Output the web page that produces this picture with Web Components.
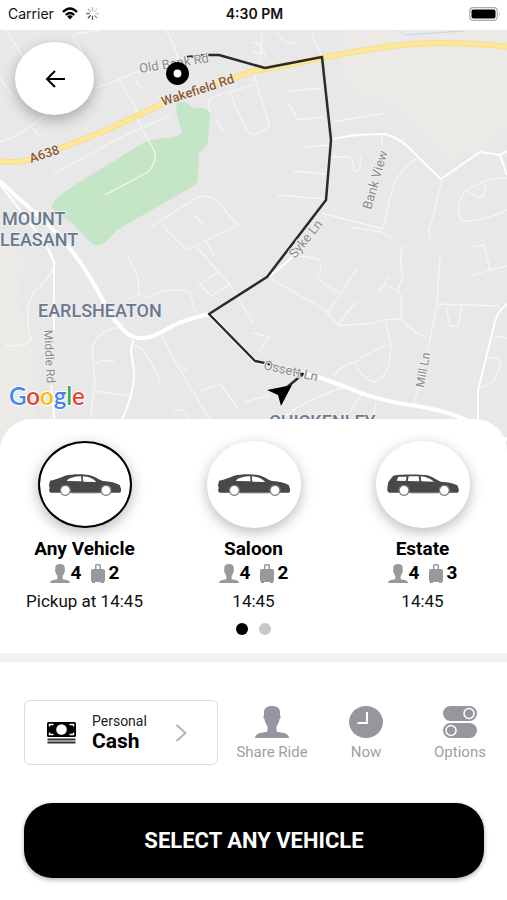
<!DOCTYPE html>
<html lang="en">
<head>
<meta charset="utf-8">
<meta name="viewport" content="width=device-width, initial-scale=1">
<title>Choose a vehicle</title>
<style>
    body {
        margin: 0;
        background: #fff;
        color: #111;
        font-family: Roboto, "Liberation Sans", sans-serif;
    }
</style>
</head>
<body>
<booking-screen></booking-screen>

<script>
const ICONS = {
    person: `<svg viewBox="0 0 34 32"><path fill="currentColor" d="M17 0c5.500 0 8 2.500 8 6.500v3c1 .5.700 3-.6 4C24 17 22.500 19 21.500 20v5.500c2.500 1 7 .8 9.500 2.300 2 1.200 3 2.700 3 4.200H0c0-1.500 1-3 3-4.200 2.500-1.500 7-1.300 9.500-2.300V20c-1-1-2.500-3-2.900-6.500-1.300-1-1.600-3.500-.6-4v-3C9 2.500 11.500 0 17 0z"/></svg>`,
    bag: `<svg viewBox="0 0 14 19"><path fill="currentColor" fill-rule="evenodd" d="M4 5V1.500Q4 0 5.500 0h3Q10 0 10 1.500V5h2q2 0 2 2v9q0 2-1 2v1h-3v-1H4v1H1v-1q-1 0-1-2V7q0-2 2-2zM5.500 1.500V5h3V1.500z"/></svg>`,
    clock: `<svg viewBox="0 0 34 32"><ellipse cx="17" cy="16" rx="17" ry="16" fill="currentColor"/><path d="M18 6v11H8.500" fill="none" stroke="#fff" stroke-width="2"/></svg>`,
    options: `<svg viewBox="0 0 34 32"><rect width="34" height="15" rx="7.500" fill="currentColor"/><rect y="17" width="34" height="15" rx="7.500" fill="currentColor"/><g fill="none" stroke="#fff" stroke-width="1.600"><circle cx="26" cy="7.500" r="5"/><circle cx="8" cy="24.500" r="5"/></g></svg>`,
    saloon: `<svg viewBox="0 0 216 66"><path fill="#484848" d="M3 20C18 17 30 12 48 5c22-6 62-6 80 0 14 4 22 12 34 16 22 2 38 5 50 12l4 11v9l-4 3H5L0 51 2 42 0 34z"/><path fill="#fff" d="M54 19q12-11 42-12l2 15-43-1zM101 7q26 1 41 17l-39-1z"/><g fill="#fff" stroke="#777" stroke-width="4"><circle cx="49" cy="49" r="15"/><circle cx="171" cy="49" r="15"/></g><path d="M68 57h84" stroke="#777" stroke-width="2"/></svg>`,
    estate: `<svg viewBox="0 0 216 66"><path fill="#484848" d="M4 24L18 6C28 1 105 0 125 5c15 4 24 13 36 18 22 1 40 5 50 11l4 11v8l-4 3H6L1 51V42z"/><path fill="#fff" d="M34 8h25l-3 13-27-1zM65 7h30l2 15-35-1zM101 7q24 2 40 16l-38-1z"/><g fill="#fff" stroke="#777" stroke-width="4"><circle cx="51" cy="49" r="15"/><circle cx="172" cy="49" r="15"/></g><path d="M70 57h84" stroke="#777" stroke-width="2"/></svg>`
};

class StatusBar extends HTMLElement {
    constructor() {
        super();
        this.attachShadow({ mode: 'open' }).innerHTML = `
            <style>
                :host {
                    display: grid;
                    grid-template-columns: 1fr auto 1fr;
                    align-items: center;
                    height: 30px;
                    padding: 0 6px 3px 8px;
                    box-sizing: border-box;
                    font-family: Inter, sans-serif;
                    font-size: 14px;
                    background: #fff;
                }
                .carrier { display: flex; align-items: center; gap: 8px; }
                .time { font-weight: 600; }
                .battery { justify-self: end; }
                svg { display: block; }
            </style>
            <div class="carrier">
                <span>Carrier</span>
                <svg width="16" height="13" viewBox="0 0 16 13"><g fill="none" stroke="#000" stroke-width="2.400"><path d="M1 5Q8-2 15 5"/><path d="M3.800 8Q8 4 12.200 8"/></g><path d="M8 8.300q1.700 0 2.800 1.300L8 12.600 5.200 9.600Q6.300 8.300 8 8.300z"/></svg>
                <svg width="13" height="13" viewBox="-6.500 -6.500 13 13" stroke-width="1.300" stroke-linecap="round" stroke="#777">
                    <path d="M0-3v-3" stroke="#bbb"/><path d="M2.100-2.100l2.100-2.100" stroke="#ccc"/><path d="M3 0h3" stroke="#ccc"/><path d="M2.100 2.100l2.100 2.100" stroke="#999"/>
                    <path d="M0 3v3" stroke="#555"/><path d="M-2.100 2.100l-2.100 2.100" stroke="#444"/><path d="M-3 0h-3"/><path d="M-2.100-2.100l-2.100-2.100" stroke="#aaa"/>
                </svg>
            </div>
            <div class="time">4:30 PM</div>
            <svg class="battery" width="32" height="14" viewBox="0 0 32 14"><rect x=".7" y=".7" width="27.600" height="12.600" rx="3.500" fill="#fff" stroke="#aaa" stroke-width="1.200"/><rect x="2.500" y="2.500" width="24" height="9" rx="1.800"/><path d="M30 5q1.500 2 0 4z" fill="#999"/></svg>
        `;
    }
}

class MapView extends HTMLElement {
    constructor() {
        super();
        this.attachShadow({ mode: 'open' }).innerHTML = `
            <style>
                :host {
                    display: flex;
                    position: relative;
                    overflow: hidden;
                    background: #e8e8e8;
                }
                .map { flex: 1; min-width: 0; min-height: 0; height: auto; }
                .label { font-size: 13px; fill: #8c8c8c; paint-order: stroke; stroke: #efefef; stroke-width: 2px; }
                .small { font-size: 12px; }
                .major { font-weight: 500; fill: #8d5a37; }
                .area { font-size: 18px; font-weight: 500; fill: #697a8e; }
                .brand { font: 600 24px Lato, sans-serif; paint-order: stroke; stroke: #fff; stroke-width: 2px; }
                button {
                    position: absolute;
                    top: 12px;
                    left: 15px;
                    width: 79px;
                    height: 73px;
                    display: grid;
                    place-items: center;
                    border: 0;
                    border-radius: 50%;
                    background: #fff;
                    box-shadow: 0 5px 14px rgba(0, 0, 0, .28);
                }
            </style>
            <svg class="map" viewBox="0 30 507 421" preserveAspectRatio="xMidYMin slice" role="img" aria-label="Route map">
                <!-- open land -->
                <path fill="#ebeae6" d="M345 30H507V128L480 148Q450 168 438 150T403 110Q385 98 352 92 335 70 345 30zM0 245L25 252 18 300 33 350 36 451H0z"/>
                <path fill="#c5e6c6" d="M177 102H187Q190 108 194 108H203Q210 110 210 114L208 142Q206 149 199 153L198 178Q198 184 192 187L117 230Q104 245 100 245 96 246 90 242L72 223Q50 210 52 205 53 198 83 180L143 143Q155 138 167 138 179 137 182 132L176 112z"/>
                <path d="M399 30l5 5 59-4" fill="none" stroke="#bcd6f2" stroke-width="1"/>
                <!-- side streets -->
                <g fill="none" stroke="#f5f5f5" stroke-width="1.300" stroke-linejoin="round">
                    <path d="M6 30L25 60M72 34L84 55M0 78L12 96M75 34L100 30M33 128L37 134 42 136M0 142Q15 138 36 122T60 112"/>
                    <path d="M53 174L120 138 172 114M135 80L142 88M195 142"/>
                    <path d="M96 88L125 77 140 70M118 78L135 106 140 124Q148 140 154 150 158 162 148 172L105 195"/>
                    <path d="M166 30Q176 48 180 66M210 112Q205 100 216 96L253 85M216 118L224 133M230 93L247 131 253 135M265 58Q264 45 253 42M253 52L263 54M262 34L260 62M277 32Q284 46 296 43M312 34L322 57"/>
                    <path d="M253 72L269 123Q270 130 253 135M290 91L322 88M288 104Q294 110 297 120L324 117M333 122L385 113M304 147L330 145M293 171L326 174M277 195L324 199M331 157H350Q353 160 354 171H359L361 157"/>
                    <path d="M382 136V146M417 158Q394 174 390 198L383 229 322 213M442 180L430 229M507 178Q486 177 464 192 453 214 463 221 485 221 507 210M468 191Q475 197 482 197 489 190 483 181"/>
                    <path d="M152 226L195 199Q207 193 216 200L238 225M195 215L203 225M162 225L187 250 238 225M196 246L230 285 254 324M205 240L214 255M197 286L219 272M229 285L211 296 201 285"/>
                    <path d="M128 257L138 277 139 294 128 299M139 294L148 298Q168 285 190 292L195 313M50 247L54 265Q50 280 33 293 23 315 31 340L25 345 5 346"/>
                    <path d="M118 327Q95 332 92 350L95 380 90 425M94 364Q105 358 115 362M95 391L130 396M162 337L180 370 210 420M180 371L188 368M134 345Q147 348 160 382M200 391L220 384 238 408M173 412Q185 405 188 420"/>
                    <path d="M271 279L325 310 338 325 370 324 383 320 401 319Q410 330 427 338M300 256L318 259Q324 267 318 273 314 280 340 293M357 269L327 314M356 302L338 324"/>
                    <path d="M403 245Q398 265 403 275L398 290 384 285 377 292M384 285L388 276M398 290L401 296V319M385 320L391 344Q370 352 355 362 360 378 375 382 391 375 391 344M355 362Q340 366 334 376"/>
                    <path d="M440 256L437 304 428 350M422 375L414 404M437 304L499 306M446 307L450 326H458L462 306M473 247L484 245 490 270 469 277M490 270L507 266M507 338L494 336M488 358Q500 357 500 362 498 385 480 387M507 304"/>
                    <path d="M350 227L382 232 391 237M430 238L428 225M253 333L270 337 259 351M346 387Q307 398 280 420M363 392L350 412 320 425M376 402L373 420M245 402L270 395"/>
                </g>
                <!-- through roads -->
                <g fill="none" stroke="#fff" stroke-linejoin="round">
                    <path stroke-width="4" d="M0 181L17 197Q50 225 67 245T100 295 118 323Q128 339 143 338 152 338 167 329T209 314L255 361 318 377 346 387Q375 400 410 405T466 420L507 440"/>
                    <path stroke-width="2" d="M331 140Q350 134 385 134 402 138 417 156L441 179 480 152 500 155 507 151M500 155L507 175M0 184L45 243 54 262V330M51 385L55 425M133 340L131 350 134 372Q135 390 122 420M507 304Q496 312 494 326L478 390V420M302 249L269 277"/>
                </g>
                <path fill="none" stroke="#f5df8d" stroke-width="6" d="M-5 160Q15 165 35 158L107 130 160 105 253 71Q290 65 322 58 400 42 443 43 475 43 510 47"/>
                <path fill="none" stroke="#ffe79a" stroke-width="4" d="M-5 160Q15 165 35 158L107 130 160 105 253 71Q290 65 322 58 400 42 443 43 475 43 510 47"/>
                <path fill="none" stroke="#2b2b2b" stroke-width="2.500" stroke-linejoin="round" d="M187 57L209 55H219L265 68 322 57 331 140 326 200 267 277 209 314 255 361 265 363 303 374 280 393"/>
                <g class="label">
                    <text transform="translate(140 73) rotate(-9)">Old Bank Rd</text>
                    <text transform="translate(371 210) rotate(-74)">Bank View</text>
                    <text transform="translate(295 259) rotate(-51)">Syke Ln</text>
                    <text class="small" transform="translate(44 330) rotate(87)">Middle Rd</text>
                    <text class="small" transform="translate(424 388) rotate(-80)">Mill Ln</text>
                    <text transform="translate(263 369) rotate(13)">Ossett Ln</text>
                    <text class="major" transform="translate(163 106) rotate(-18)">Wakefield Rd</text>
                    <text class="major" transform="translate(31 163) rotate(-18)">A638</text>
                    <text class="area" x="2" y="225">MOUNT</text>
                    <text class="area" x="0" y="246">LEASANT</text>
                    <text class="area" x="38" y="317">EARLSHEATON</text>
                    <text class="area" x="269" y="428">CHICKENLEY</text>
                </g>
                <text class="brand" x="9" y="405"><tspan fill="#4285f4">G</tspan><tspan fill="#ea4335">o</tspan><tspan fill="#fbbc05">o</tspan><tspan fill="#4285f4">g</tspan><tspan fill="#34a853">l</tspan><tspan fill="#ea4335">e</tspan></text>
                <!-- pickup and current position -->
                <circle cx="177.500" cy="73.500" r="7.700" fill="#fff" stroke="#000" stroke-width="7.500"/>
                <path d="M267 390L292 385 281 406 278 395z"/>
            </svg>
            <button type="button" aria-label="Back">
                <svg width="20" height="18" viewBox="0 0 20 18" fill="none" stroke="#000" stroke-width="2"><path d="M10 1L2 9l8 8M2 9h18"/></svg>
            </button>
        `;
    }
}

class VehicleOption extends HTMLElement {
    connectedCallback() {
        const car = this.getAttribute('car');
        const selected = this.hasAttribute('selected');
        this.attachShadow({ mode: 'open' }).innerHTML = `
            <style>
                :host { display: block; }
                button {
                    display: flex;
                    flex-direction: column;
                    align-items: center;
                    width: 100%;
                    padding: 0;
                    border: 0;
                    background: none;
                    color: #111;
                    font: inherit;
                    line-height: 24px;
                }
                .disc {
                    display: grid;
                    place-items: center;
                    box-sizing: border-box;
                    width: 94px;
                    height: 87px;
                    margin-bottom: 9px;
                    border-radius: 50%;
                    background: #fff;
                    box-shadow: 0 4px 14px rgba(0, 0, 0, .28);
                }
                :host([selected]) .disc { border: 2px solid #000; }
                .disc svg { width: 72px; height: 22px; }
                .name { font-size: 19px; font-weight: 700; color: #000; }
                .capacity {
                    display: flex;
                    align-items: center;
                    font-size: 19px;
                    font-weight: 700;
                    color: #000;
                }
                .capacity svg { color: #98989f; height: 19px; }
                .capacity .seats { width: 20px; margin-right: 1px; }
                .capacity .bags { width: 14px; margin: 0 4px 0 9px; }
                .pickup { margin-top: 4px; font-size: 17px; }
            </style>
            <button type="button" aria-pressed="${selected}">
                <span class="disc">${ICONS[car]}</span>
                <span class="name"><slot></slot></span>
                <span class="capacity">
                    ${ICONS.person.replace('<svg', '<svg class="seats" preserveAspectRatio="none"')}
                    <span>${this.getAttribute('seats')}</span>
                    ${ICONS.bag.replace('<svg', '<svg class="bags"')}
                    <span>${this.getAttribute('bags')}</span>
                </span>
                <span class="pickup">${this.getAttribute('pickup')}</span>
            </button>
        `;
    }
}

class VehiclePicker extends HTMLElement {
    constructor() {
        super();
        this.attachShadow({ mode: 'open' }).innerHTML = `
            <style>
                :host {
                    display: block;
                    position: relative;
                    margin-top: -32px;
                    padding: 22px 0 18px;
                    border-radius: 32px 32px 0 0;
                    background: #fff;
                }
                .list { display: grid; grid-template-columns: repeat(3, 1fr); }
                .pages { display: flex; justify-content: center; gap: 11px; margin-top: 10px; }
                .pages button {
                    width: 12px;
                    height: 12px;
                    padding: 0;
                    border: 0;
                    border-radius: 50%;
                    background: #c8c8c8;
                }
                .pages .current { background: #000; }
            </style>
            <div class="list"><slot></slot></div>
            <div class="pages">
                <button type="button" class="current" aria-label="Page 1"></button>
                <button type="button" aria-label="Page 2"></button>
            </div>
        `;
    }
}

class PaymentButton extends HTMLElement {
    constructor() {
        super();
        this.attachShadow({ mode: 'open' }).innerHTML = `
            <style>
                :host { display: block; }
                button {
                    display: flex;
                    align-items: center;
                    width: 100%;
                    height: 65px;
                    padding: 0 30px 0 22px;
                    border: 1px solid #dedede;
                    border-radius: 6px;
                    background: #fff;
                    color: #222;
                    font: inherit;
                    text-align: left;
                }
                .text { flex: 1; margin-left: 16px; }
                .account { display: block; font-size: 14px; line-height: 16px; }
                .method { display: block; font-size: 21px; line-height: 24px; font-weight: 700; color: #000; }
            </style>
            <button type="button">
                <svg width="29" height="22" viewBox="0 0 29 22">
                    <rect width="29" height="15" rx="1.500"/>
                    <circle cx="14.500" cy="7.500" r="5.300" fill="#fff"/>
                    <path d="M2.500 4.500v-2h4M22.500 2.500h4v2M2.500 10.500v2h4M22.500 12.500h4v-2" fill="none" stroke="#fff" stroke-width="1.400"/>
                    <path d="M.5 17.500h28M.5 20.500h28" stroke="#333" stroke-width="1.800"/>
                </svg>
                <span class="text"><span class="account">Personal</span><span class="method">Cash</span></span>
                <svg width="12" height="18" viewBox="0 0 12 18" fill="none" stroke="#b5b5b5" stroke-width="2"><path d="M1.500 1l9 8-9 8"/></svg>
            </button>
        `;
    }
}

class RideAction extends HTMLElement {
    connectedCallback() {
        this.attachShadow({ mode: 'open' }).innerHTML = `
            <style>
                :host { display: block; }
                button {
                    display: flex;
                    flex-direction: column;
                    align-items: center;
                    gap: 6px;
                    width: 100%;
                    padding: 0;
                    border: 0;
                    background: none;
                    color: #a0a0a4;
                    font: inherit;
                    font-size: 15px;
                    line-height: 16px;
                    white-space: nowrap;
                }
                svg { width: 34px; height: 32px; color: #96969f; }
            </style>
            <button type="button">${ICONS[this.getAttribute('icon')]}<span><slot></slot></span></button>
        `;
    }
}

class BookingBar extends HTMLElement {
    constructor() {
        super();
        this.attachShadow({ mode: 'open' }).innerHTML = `
            <style>
                :host {
                    display: block;
                    padding: 38px 0 22px 24px;
                    border-top: 9px solid #f2f2f2;
                    background: #fff;
                }
                .row {
                    display: grid;
                    grid-template-columns: 194px 1fr;
                    gap: 7px;
                    align-items: center;
                    margin-bottom: 38px;
                }
                .actions { display: grid; grid-template-columns: repeat(3, 1fr); }
                .confirm {
                    display: block;
                    width: calc(100% - 23px);
                    height: 75px;
                    border: 0;
                    border-radius: 28px;
                    background: #000;
                    color: #fff;
                    font: inherit;
                    font-size: 22px;
                    font-weight: 700;
                    box-shadow: 0 2px 5px rgba(0, 0, 0, .3);
                }
            </style>
            <div class="row">
                <payment-button></payment-button>
                <div class="actions">
                    <ride-action icon="person">Share Ride</ride-action>
                    <ride-action icon="clock">Now</ride-action>
                    <ride-action icon="options">Options</ride-action>
                </div>
            </div>
            <button type="button" class="confirm"><slot></slot></button>
        `;
    }
}

class BookingScreen extends HTMLElement {
    constructor() {
        super();
        this.attachShadow({ mode: 'open' }).innerHTML = `
            <style>
                :host { display: flex; flex-direction: column; min-height: 100vh; }
                map-view { flex: 1 1 300px; }
            </style>
            <status-bar></status-bar>
            <map-view></map-view>
            <vehicle-picker>
                <vehicle-option car="saloon" seats="4" bags="2" pickup="Pickup at 14:45" selected>Any Vehicle</vehicle-option>
                <vehicle-option car="saloon" seats="4" bags="2" pickup="14:45">Saloon</vehicle-option>
                <vehicle-option car="estate" seats="4" bags="3" pickup="14:45">Estate</vehicle-option>
            </vehicle-picker>
            <booking-bar>SELECT ANY VEHICLE</booking-bar>
        `;
    }
}

customElements.define('status-bar', StatusBar);
customElements.define('map-view', MapView);
customElements.define('vehicle-option', VehicleOption);
customElements.define('vehicle-picker', VehiclePicker);
customElements.define('payment-button', PaymentButton);
customElements.define('ride-action', RideAction);
customElements.define('booking-bar', BookingBar);
customElements.define('booking-screen', BookingScreen);
</script>
</body>
</html>
